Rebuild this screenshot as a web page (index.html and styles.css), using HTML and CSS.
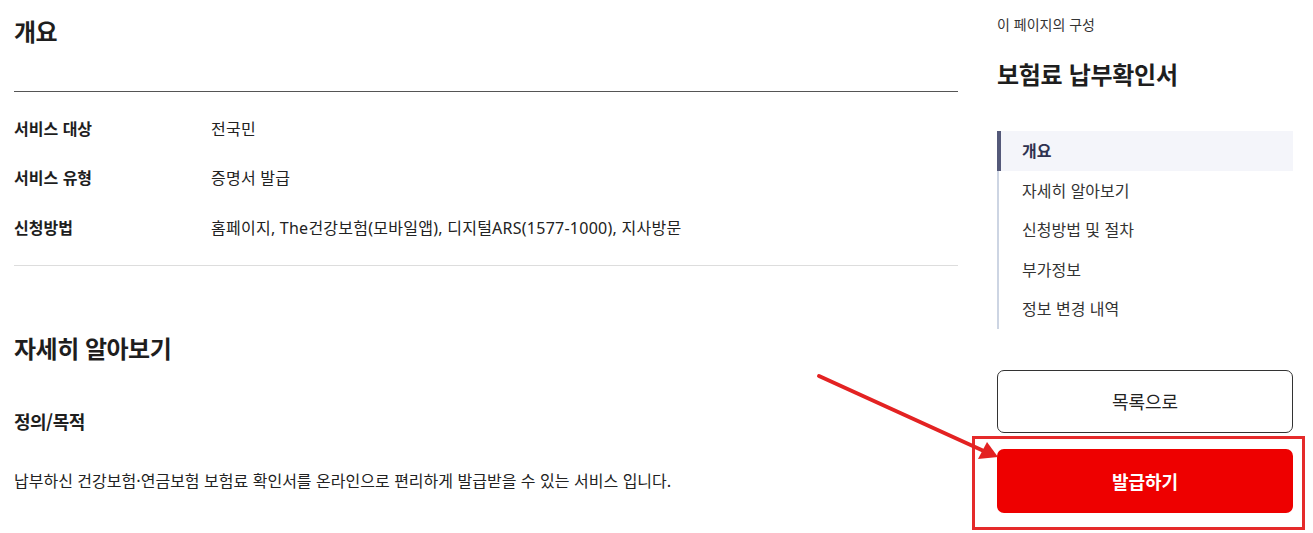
FILE: index.html
```html
<!DOCTYPE html>
<html lang="ko">
<head>
<meta charset="utf-8">
<title>보험료 납부확인서</title>
<link rel="stylesheet" href="styles.css">
</head>
<body>
<div class="page">
  <main class="content">
    <section class="overview">
      <h2 class="sec-title">개요</h2>
      <dl class="info">
        <div class="info-row"><dt>서비스 대상</dt><dd>전국민</dd></div>
        <div class="info-row"><dt>서비스 유형</dt><dd>증명서 발급</dd></div>
        <div class="info-row"><dt>신청방법</dt><dd>홈페이지, The건강보험(모바일앱), 디지털ARS(1577-1000), 지사방문</dd></div>
      </dl>
    </section>
    <section class="detail">
      <h2 class="sec-title">자세히 알아보기</h2>
      <h3 class="sub-title">정의/목적</h3>
      <p class="desc">납부하신 건강보험·연금보험 보험료 확인서를 온라인으로 편리하게 발급받을 수 있는 서비스 입니다.</p>
    </section>
  </main>
  <aside class="side">
    <p class="side-label">이 페이지의 구성</p>
    <h2 class="side-title">보험료 납부확인서</h2>
    <nav class="toc">
      <a class="toc-item active">개요</a>
      <a class="toc-item">자세히 알아보기</a>
      <a class="toc-item">신청방법 및 절차</a>
      <a class="toc-item">부가정보</a>
      <a class="toc-item">정보 변경 내역</a>
    </nav>
    <div class="actions">
      <button class="btn btn-outline">목록으로</button>
      <button class="btn btn-primary">발급하기</button>
    </div>
  </aside>
</div>
<div class="highlight-box"></div>
<svg class="arrow" width="200" height="100" viewBox="0 0 200 100">
  <line x1="3" y1="3" x2="170" y2="79" stroke="#e32222" stroke-width="4" stroke-linecap="round"/>
  <polygon points="182,84 162,86 171,69" fill="#e32222"/>
</svg>
</body>
</html>
```
FILE: styles.css
```css
* { box-sizing: border-box; }
html, body { margin: 0; padding: 0; background: #fff; }
body {
  font-family: "Noto Sans CJK KR", "Noto Sans", sans-serif;
  color: #1e1e1e;
  width: 1313px;
  height: 533px;
  overflow: hidden;
  position: relative;
}
.page {
  display: flex;
  gap: 39px;
  padding-left: 14px;
}
.content { width: 944px; }
.sec-title {
  margin: 0;
  font-size: 24px;
  font-weight: 700;
  line-height: 32px;
  letter-spacing: -0.5px;
}
.overview .sec-title { padding-top: 15px; padding-bottom: 44px; }
.info {
  margin: 0;
  border-top: 1px solid #555;
  border-bottom: 1px solid #ddd;
  padding: 11px 0 13px;
}
.info-row {
  display: flex;
  height: 49.5px;
  align-items: center;
}
.info-row dt {
  width: 197px;
  font-weight: 700;
  font-size: 16px;
}
.info-row dd {
  margin: 0;
  font-size: 16px;
  color: #222;
  letter-spacing: 0.25px;
  font-family: "Noto Sans", "Noto Sans CJK KR", sans-serif;
}
.detail .sec-title { padding-top: 66px; }
.sub-title {
  margin: 0;
  padding-top: 45px;
  font-size: 18px;
  font-weight: 700;
  line-height: 24px;
  letter-spacing: -0.5px;
}
.desc {
  margin: 0;
  padding-top: 35px;
  font-size: 16px;
  line-height: 24px;
  color: #222;
}
.side { width: 296px; }
.side-label {
  margin: 0;
  padding-top: 14px;
  font-size: 14px;
  line-height: 20px;
  color: #333;
}
.side-title {
  margin: 0;
  padding-top: 24px;
  font-size: 24px;
  line-height: 32px;
  font-weight: 700;
  letter-spacing: -0.3px;
}
.toc {
  margin-top: 41px;
  border-left: 2px solid #cdd5e3;
  display: flex;
  flex-direction: column;
}
.toc-item {
  display: block;
  height: 39.6px;
  line-height: 39.6px;
  padding-left: 23px;
  font-size: 16px;
  color: #333;
}
.toc-item.active {
  background: #f4f5fa;
  font-weight: 700;
  color: #2e3250;
  margin-left: -2px;
  border-left: 4px solid #545979;
  padding-left: 21px;
}
.actions {
  margin-top: 41px;
  display: flex;
  flex-direction: column;
  gap: 16px;
}
.btn {
  width: 296px;
  height: 63px;
  border-radius: 7px;
  font-family: inherit;
  font-size: 18px;
}
.btn-outline {
  background: #fff;
  border: 1px solid #333;
  color: #222;
}
.btn-primary {
  background: #ee0000;
  border: none;
  color: #fff;
  font-weight: 700;
  height: 64px;
}
.highlight-box {
  position: absolute;
  left: 972px;
  top: 436px;
  width: 333px;
  height: 94px;
  border: 3px solid #e52a2a;
}
.arrow {
  position: absolute;
  left: 816px;
  top: 373px;
  overflow: visible;
}
```
